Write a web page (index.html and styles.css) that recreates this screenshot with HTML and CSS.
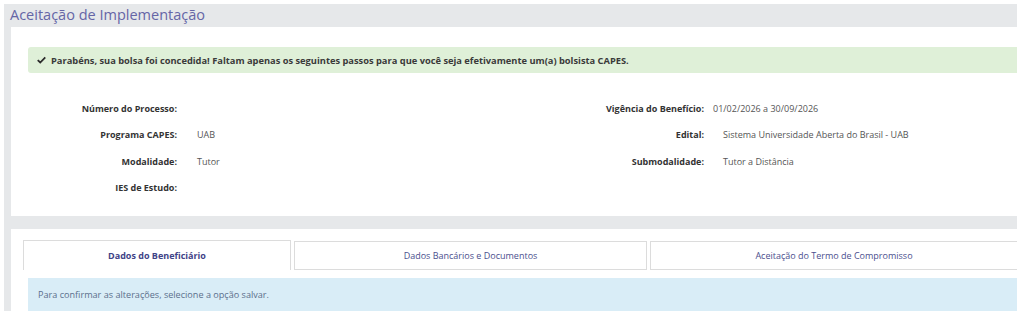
FILE: index.html
```html
<!DOCTYPE html>
<html lang="pt-BR">
<head>
    <meta charset="UTF-8">
    <meta name="viewport" content="width=device-width, initial-scale=1.0">
    <title>Aceitação de Implementação</title>
    <link rel="stylesheet" href="styles.css">
</head>
<body>
    <div class="page">
        <h1 class="page-title">Aceitação de Implementação</h1>

        <div class="card card-summary">
            <div class="alert alert-success">
                <svg class="check" viewBox="0 0 10 8" width="9" height="8">
                    <path d="M0.8 4.2 L3.6 6.8 L9.2 1.2" fill="none" stroke="#2b2b2b" stroke-width="2"/>
                </svg>
                <span>Parabéns, sua bolsa foi concedida! Faltam apenas os seguintes passos para que você seja efetivamente um(a) bolsista CAPES.</span>
            </div>

            <div class="details">
                <div class="label">Número do Processo:</div>
                <div class="value"></div>
                <div class="label">Vigência do Benefício:</div>
                <div class="value">01/02/2026 a 30/09/2026</div>

                <div class="label">Programa CAPES:</div>
                <div class="value">UAB</div>
                <div class="label">Edital:</div>
                <div class="value value-shift">Sistema Universidade Aberta do Brasil - UAB</div>

                <div class="label">Modalidade:</div>
                <div class="value">Tutor</div>
                <div class="label">Submodalidade:</div>
                <div class="value value-shift">Tutor a Distância</div>

                <div class="label">IES de Estudo:</div>
                <div class="value"></div>
                <div class="label"></div>
                <div class="value"></div>
            </div>
        </div>

        <div class="card card-tabs">
            <ul class="tabs">
                <li class="tab tab-active">Dados do Beneficiário</li>
                <li class="tab tab-2">Dados Bancários e Documentos</li>
                <li class="tab tab-3">Aceitação do Termo de Compromisso</li>
            </ul>
            <div class="alert alert-info">Para confirmar as alterações, selecione a opção salvar.</div>
        </div>
    </div>
</body>
</html>
```

FILE: styles.css
```css
body {
    margin: 0;
    background-color: #fff;
    font-family: "Open Sans", "Noto Sans", sans-serif;
    color: #333;
}
.page {
    margin: 4px 0 0 4px;
    width: 1013px;
    height: 307px;
    background-color: #e6e8ea; /* gray frame around the cards */
    padding-left: 7px;
    box-sizing: border-box;
}
.page-title {
    margin: 0 0 0 -1px;
    height: 23px;
    line-height: 22px;
    font-size: 14.5px;
    font-weight: normal;
    color: #6565a6;
}
.card {
    background-color: #fff;
}
.card-summary {
    height: 189px;
    padding-top: 20px;
    box-sizing: border-box;
}
.alert {
    margin-left: 17px;
}
.alert-success {
    display: flex;
    align-items: center;
    height: 26px;
    background-color: #dff0d8;
    border-radius: 3px 0 0 3px;
    font-size: 9.3px;
    font-weight: bold;
    color: #3a3a3a;
}
.check {
    margin: 0 5px 0 9px;
}
.details {
    display: grid;
    grid-template-columns: 166px 320px 207px 1fr;
    grid-auto-rows: 26.5px;
    margin-top: 22px;
    font-size: 9px;
    align-items: center;
}
.label {
    text-align: right;
    font-weight: bold;
    color: #333;
}
.value {
    padding-left: 20px;
    color: #555;
}
.details .value:nth-child(4n) {
    padding-left: 9px;
}
.details .value-shift:nth-child(4n) {
    padding-left: 19px;
}
.card-tabs {
    margin-top: 13px;
    height: 82px;
    padding-top: 11px;
    box-sizing: border-box;
}
.tabs {
    display: flex;
    gap: 3px;
    list-style: none;
    margin: 0 0 0 12px;
    padding: 0;
    height: 30px;
}
.tab {
    display: flex;
    align-items: center;
    justify-content: center;
    border: 1px solid #dcdcdc;
    box-sizing: border-box;
    font-size: 9px;
    color: #4b4f8e;
}
.tab-active {
    width: 268px;
    border-bottom: none;
    font-weight: bold;
    color: #3f4387;
}
.tab-2 {
    width: 353px;
    margin-top: 1px;
}
.tab-3 {
    flex: 1;
    margin-top: 1px;
    border-right: none;
}
.alert-info {
    margin-top: 8px;
    height: 33px;
    display: flex;
    align-items: center;
    padding-left: 10px;
    background-color: #d9edf7;
    font-size: 9.1px;
    color: #5b6f8c;
}
```
